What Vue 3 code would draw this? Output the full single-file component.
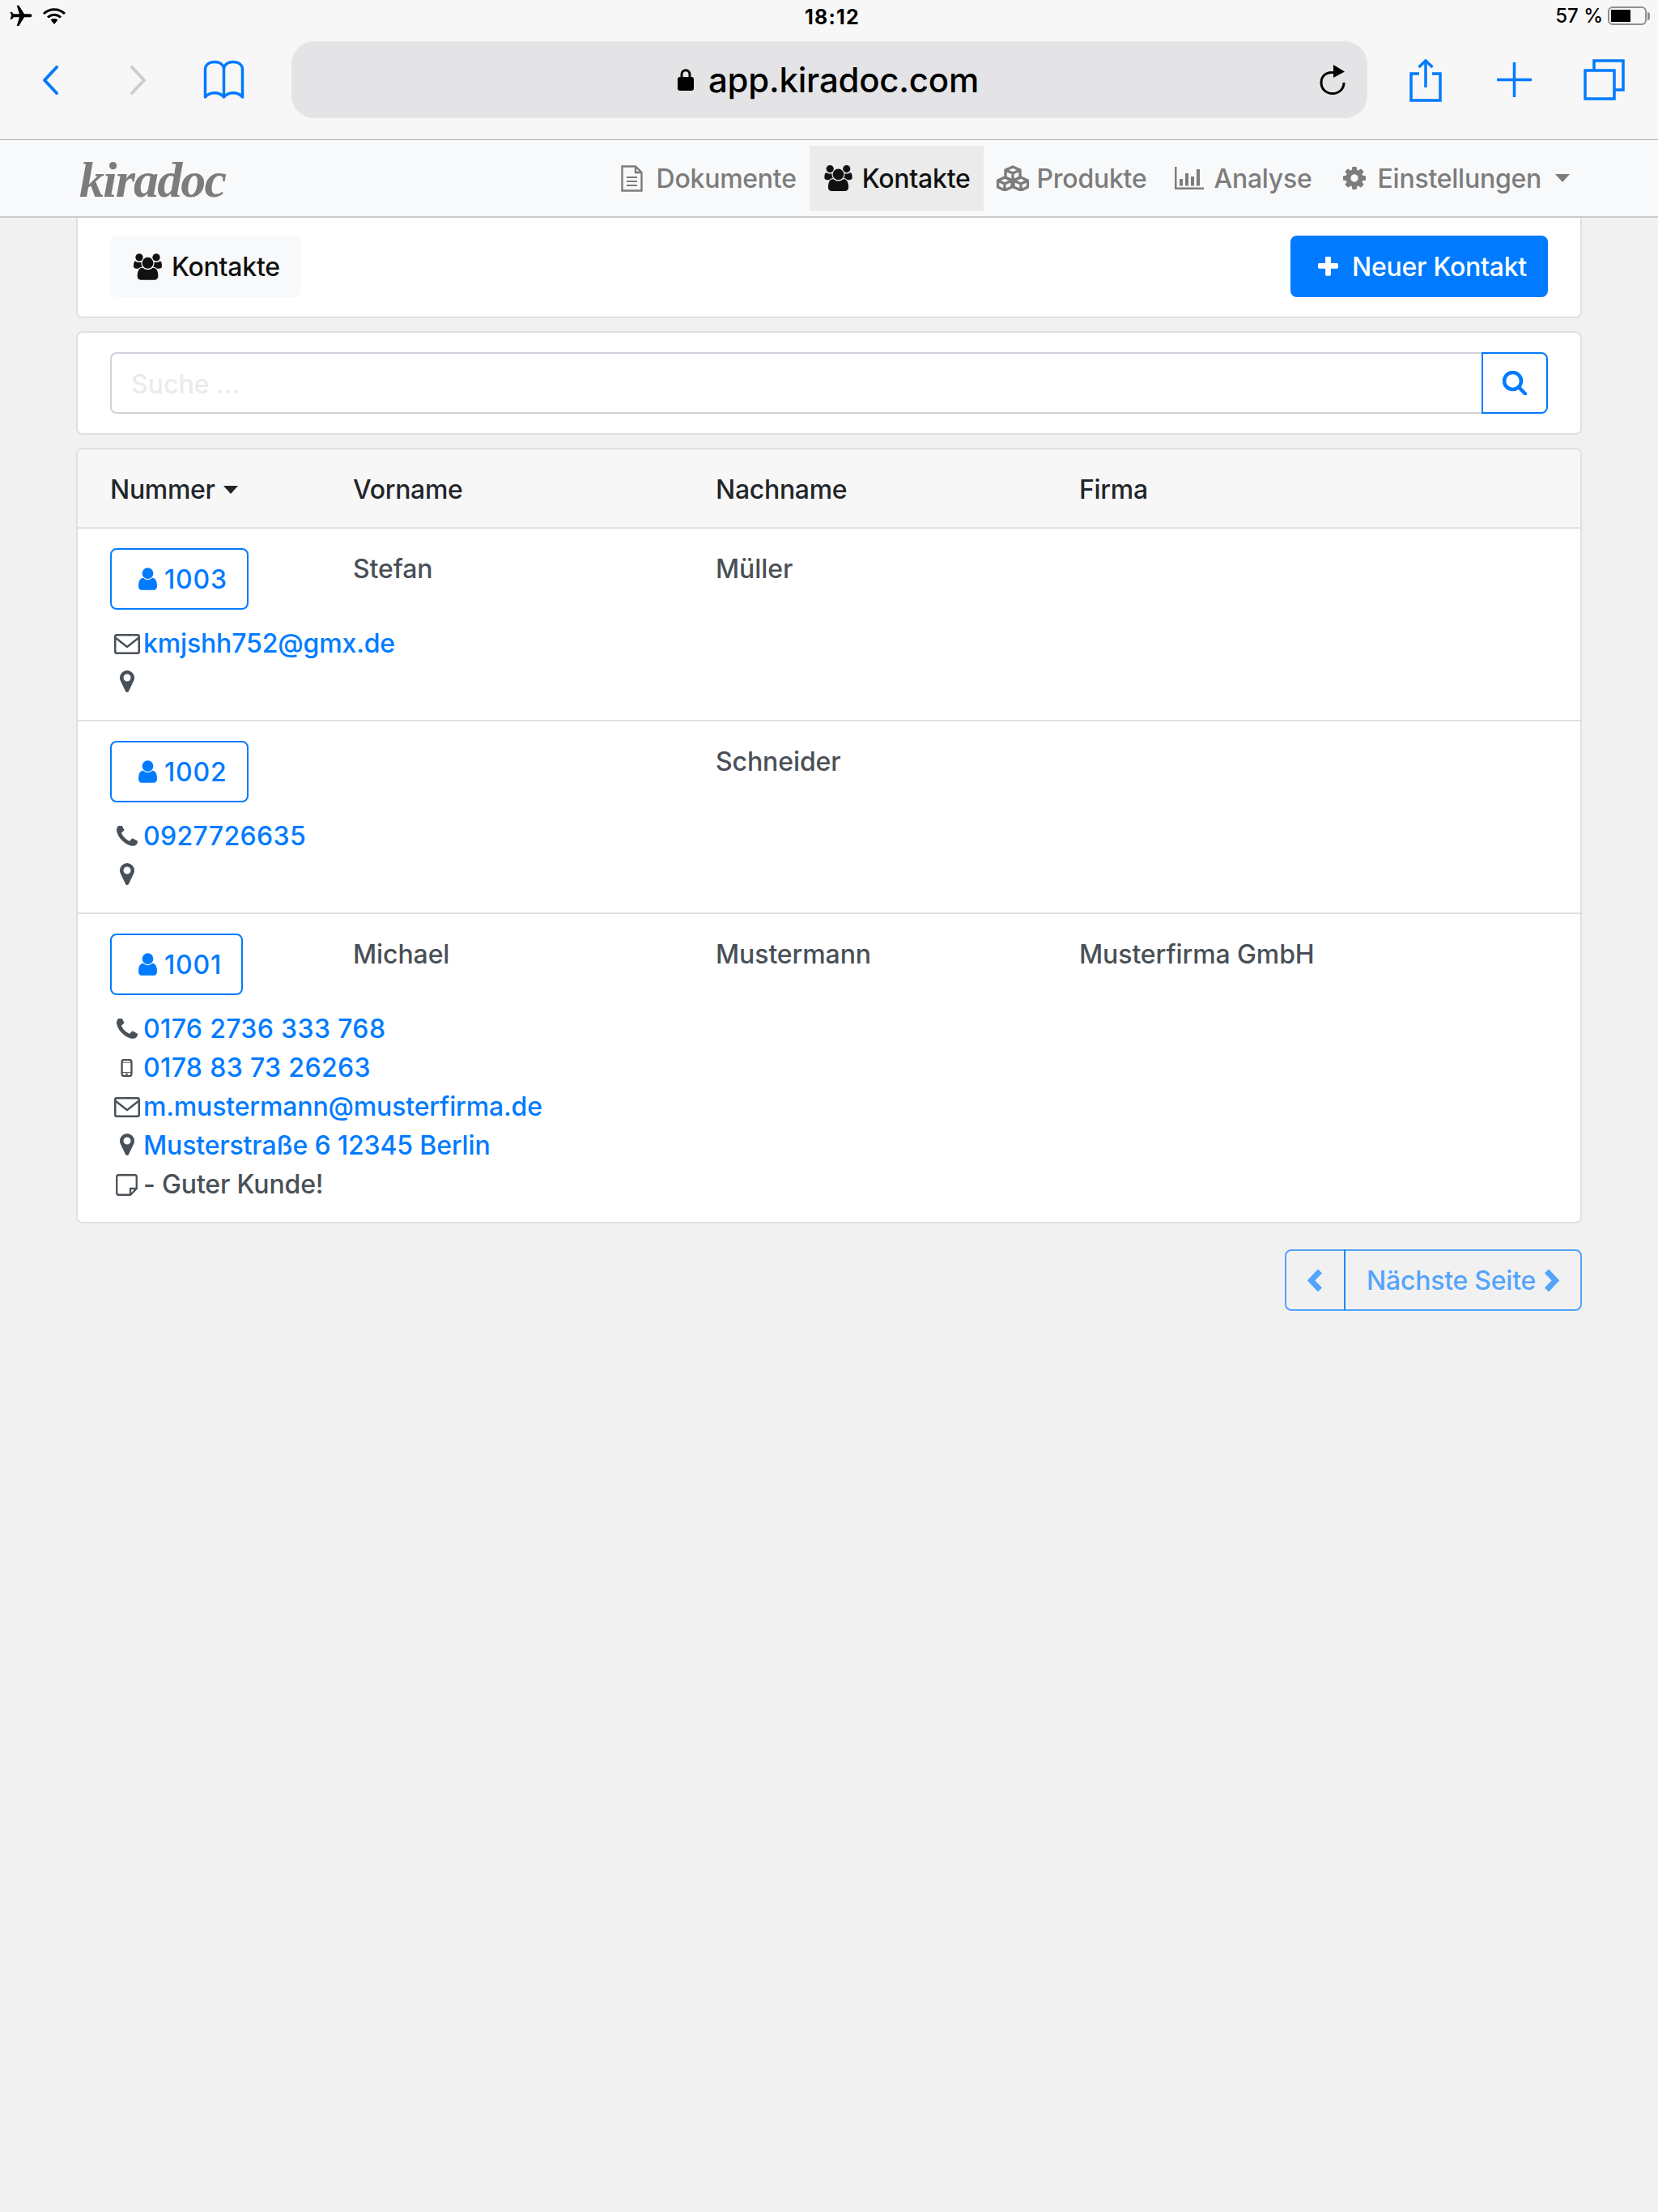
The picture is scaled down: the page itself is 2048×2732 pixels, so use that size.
<script setup>
const navItems = [
  { key: 'doc', label: 'Dokumente', icon: 'i-doc' },
  { key: 'con', label: 'Kontakte', icon: 'i-users', active: true },
  { key: 'pro', label: 'Produkte', icon: 'i-cubes' },
  { key: 'ana', label: 'Analyse', icon: 'i-bars' },
  { key: 'set', label: 'Einstellungen', icon: 'i-gear', caret: true },
]
const contacts = [
  { nr: '1003', first: 'Stefan', last: 'Müller', firm: '', lines: [
    { icon: 'mail', text: 'kmjshh752@gmx.de', link: true },
    { icon: 'pin', text: '', link: false },
  ] },
  { nr: '1002', first: '', last: 'Schneider', firm: '', lines: [
    { icon: 'phone', text: '0927726635', link: true, digits: true },
    { icon: 'pin', text: '', link: false },
  ] },
  { nr: '1001', first: 'Michael', last: 'Mustermann', firm: 'Musterfirma GmbH', lines: [
    { icon: 'phone', text: '0176 2736 333 768', link: true, digits: true },
    { icon: 'mobile', text: '0178 83 73 26263', link: true, digits: true },
    { icon: 'mail', text: 'm.mustermann@musterfirma.de', link: true },
    { icon: 'pin', text: 'Musterstraße 6 12345 Berlin', link: true },
    { icon: 'note', text: '- Guter Kunde!', link: false },
  ] },
]
</script>

<template>
  <div class="page">
    <svg class="defs" width="0" height="0" aria-hidden="true">
      <defs>
        <symbol id="i-users" viewBox="0 0 1920 1792"><path fill="currentColor" d="M593 896q-162 5-265 128h-134q-82 0-138-40.5t-56-118.5q0-353 124-353 6 0 43.5 21t97.5 42.5 119 21.5q67 0 133-23-5 37-5 66 0 139 81 256zm1071 637q0 120-73 189.5t-194 69.5h-874q-121 0-194-69.5t-73-189.5q0-53 3.5-103.5t14-109 26.5-108.5 43-97.5 62-81 85.5-53.5 111.5-20q10 0 43 21.5t73 48 107 48 135 21.5 135-21.5 107-48 73-48 43-21.5q61 0 111.5 20t85.5 53.5 62 81 43 97.5 26.5 108.5 14 109 3.5 103.5zm-1024-1277q0 106-75 181t-181 75-181-75-75-181 75-181 181-75 181 75 75 181zm704 384q0 159-112.5 271.5t-271.5 112.5-271.5-112.5-112.5-271.5 112.5-271.5 271.5-112.5 271.5 112.5 112.5 271.5zm576 225q0 78-56 118.5t-138 40.5h-134q-103-123-265-128 81-117 81-256 0-29-5-66 66 23 133 23 59 0 119-21.5t97.5-42.5 43.5-21q124 0 124 353zm-128-609q0 106-75 181t-181 75-181-75-75-181 75-181 181-75 181 75 75 181z"/></symbol>
        <symbol id="i-user" viewBox="256 128 1280 1536"><path fill="currentColor" d="M1536 1399q0 109-62.5 187t-150.5 78h-854q-88 0-150.5-78t-62.5-187q0-85 8.5-160.5t31.5-152 58.5-131 94-89 134.5-34.5q131 128 313 128t313-128q76 0 134.5 34.5t94 89 58.5 131 31.5 152 8.5 160.5zm-256-887q0 159-112.5 271.5t-271.5 112.5-271.5-112.5-112.5-271.5 112.5-271.5 271.5-112.5 271.5 112.5 112.5 271.5z"/></symbol>
        <symbol id="i-pin" viewBox="384 128 1024 1536"><path fill="currentColor" d="M1152 640q0-106-75-181t-181-75-181 75-75 181 75 181 181 75 181-75 75-181zm256 0q0 109-33 179l-364 774q-16 33-47.5 52t-67.5 19-67.5-19-46.5-52l-365-774q-33-70-33-179 0-212 150-362t362-150 362 150 150 362z"/></symbol>
        <symbol id="i-phone" viewBox="192 192 1408 1408"><path fill="currentColor" d="M1600 1240q0 27-10 70.5t-21 68.5q-21 50-122 106-94 51-186 51-27 0-53-3.5t-57.5-12.5-47-14.5-55.5-20.5-49-18q-98-35-175-83-127-79-264-216t-216-264q-48-77-83-175-3-9-18-49t-20.5-55.5-14.5-47-12.5-57.5-3.5-53q0-92 51-186 56-101 106-122 25-11 68.5-21t70.5-10q14 0 21 3 18 6 53 76 11 19 30 54t35 63.5 31 53.5q3 4 17.5 25t21.5 35.5 7 28.5q0 20-28.5 50t-62 55-62 53-28.5 46q0 9 5 22.5t8.5 20.5 14 24 11.5 19q76 137 174 235t235 174q2 1 19 11.5t24 14 20.5 8.5 22.5 5q18 0 46-28.5t53-62 55-62 50-28.5q14 0 28.5 7t35.5 21.5 25 17.5q25 15 53.5 31t63.5 35 54 30q70 35 76 53 3 7 3 21z"/></symbol>
        <symbol id="i-gear" viewBox="128 128 1536 1536"><path fill="currentColor" d="M1152 896q0-106-75-181t-181-75-181 75-75 181 75 181 181 75 181-75 75-181zm512-109v222q0 12-8 23t-20 13l-185 28q-19 54-39 91 35 50 107 138 10 12 10 25t-9 23q-27 37-99 108t-94 71q-12 0-26-9l-138-108q-44 23-91 38-16 136-29 186-7 28-36 28h-222q-14 0-24.5-8.5t-11.5-21.5l-28-184q-49-16-90-37l-141 107q-10 9-25 9-14 0-25-11-126-114-165-168-7-10-7-23 0-12 8-23 15-21 51-66.5t54-70.5q-27-50-41-99l-183-27q-13-2-21-12.5t-8-23.5v-222q0-12 8-23t19-13l186-28q14-46 39-92-40-57-107-138-10-12-10-24 0-10 9-23 26-36 98.5-107.5t94.5-71.5q13 0 26 10l138 107q44-23 91-38 16-136 29-186 7-28 36-28h222q14 0 24.5 8.5t11.5 21.5l28 184q49 16 90 37l142-107q9-9 24-9 13 0 25 10 129 119 165 170 7 8 7 22 0 12-8 23-15 21-51 66.5t-54 70.5q26 50 41 98l183 28q13 2 21 12.5t8 23.5z"/></symbol>
        <symbol id="i-doc" viewBox="0 0 27 33"><path fill="none" stroke="currentColor" stroke-width="2.4" d="M1.5 1.5H18L25.5 9V31.5H1.5Z M18 1.5V9H25.5"/><path fill="none" stroke="currentColor" stroke-width="2.2" d="M7 15H20M7 20H20M7 25H20"/></symbol>
        <symbol id="i-cubes" viewBox="0 0 40 32"><g fill="none" stroke="currentColor" stroke-width="3.4" stroke-linejoin="round"><path d="M20 2L29 6V15L20 19L11 15V6Z M11 6L20 10L29 6 M20 10V19"/><path d="M10 15L19 19V27L10 31L1.5 27V19Z M1.5 19L10 23L19 19 M10 23V31"/><path d="M30 15L38.5 19V27L30 31L21 27V19Z M21 19L30 23L38.5 19 M30 23V31"/></g></symbol>
        <symbol id="i-bars" viewBox="0 0 36 28"><path fill="currentColor" d="M0 0H2.500V25.500H36V28H0Z M6 15H10V23.500H6Z M13 8H17V23.500H13Z M20 12H24V23.500H20Z M27 3H31V23.500H27Z"/></symbol>
        <symbol id="i-plus" viewBox="192 192 1408 1408"><path fill="currentColor" d="M1600 736v192q0 40-28 68t-68 28h-416v416q0 40-28 68t-68 28h-192q-40 0-68-28t-28-68v-416h-416q-40 0-68-28t-28-68v-192q0-40 28-68t68-28h416v-416q0-40 28-68t68-28h192q40 0 68 28t28 68v416h416q40 0 68 28t28 68z"/></symbol>
      </defs>
    </svg>

    <header class="chrome">
      <div class="status">
        <div class="status-left">
          <svg class="plane" viewBox="0 0 24 24"><path fill="#000" transform="rotate(90 12 12)" d="M21 16v-2l-8-5V3.500c0-.83-.67-1.500-1.500-1.500S10 2.670 10 3.500V9l-8 5v2l8-2.500V19l-2 1.500V22l3.500-1 3.500 1v-1.500L13 19v-5.500l8 2.500z"/></svg>
          <svg class="wifi" viewBox="0 0 30 20"><g fill="none" stroke="#000" stroke-width="3"><path d="M2 7C9 0 21 0 28 7"/><path d="M7 11.500C11.500 7 18.500 7 23 11.500"/></g><path fill="#000" d="M10.500 14.500C13 12.500 17 12.500 19.500 14.500L15 20Z"/></svg>
        </div>
        <div class="time">18:12</div>
        <div class="status-right">
          <span class="pct">57 %</span>
          <span class="battery"><span class="battery-fill"></span></span>
          <span class="battery-tip"></span>
        </div>
      </div>
      <div class="toolbar">
        <svg class="back" viewBox="0 0 20 36"><path d="M18 2L3 18L18 34" fill="none" stroke="#007aff" stroke-width="4" stroke-linecap="round" stroke-linejoin="round"/></svg>
        <svg class="forward" viewBox="0 0 20 36"><path d="M2 2L17 18L2 34" fill="none" stroke="#cdcdcd" stroke-width="4" stroke-linecap="round" stroke-linejoin="round"/></svg>
        <svg class="book" viewBox="0 0 51 49"><path d="M25.500 46V12C25.500 6 21 2.500 14 2.500C7 2.500 2.500 6 2.500 12V46C8 39 20 39 25.500 46C31 39 43 39 48.500 46V12C48.500 6 44 2.500 37 2.500C30 2.500 25.500 6 25.500 12" fill="none" stroke="#007aff" stroke-width="3.500" stroke-linejoin="round"/></svg>
        <div class="urlbar">
          <span></span>
          <div class="url">
            <svg class="lock" viewBox="0 0 20 27"><path fill="none" stroke="#000" stroke-width="3" d="M5 12V7C5 0 15 0 15 7V12"/><rect y="10" width="20" height="17" rx="3" fill="#000"/></svg>
            <span>app.kiradoc.com</span>
          </div>
          <svg class="reload" viewBox="0 0 32 37"><path d="M21 10.500C10 7 2 13 2 22C2 30 8 35.500 16 35.500C24 35.500 30 30 30 22" fill="none" stroke="#000" stroke-width="3"/><path d="M17 0L31 8.500L17 16Z" fill="#000"/></svg>
        </div>
        <svg class="share" viewBox="0 0 40 54"><g fill="none" stroke="#007aff" stroke-width="3.500"><path d="M12 19H2V52H38V19H28"/><path d="M20 3V36"/><path d="M11.500 11L20 3L28.500 11"/></g></svg>
        <svg class="newtab" viewBox="0 0 43 43"><path d="M21.500 0V43M0 21.500H43" fill="none" stroke="#007aff" stroke-width="3.500"/></svg>
        <svg class="tabs" viewBox="0 0 51 51"><g fill="none" stroke="#007aff" stroke-width="3.500"><rect x="2" y="14" width="36" height="35"/><path d="M13 14V2H49V38H38"/></g></svg>
      </div>
    </header>

    <nav class="navbar">
      <div class="brand">kiradoc</div>
      <div class="nav">
        <div v-for="item in navItems" :key="item.key" class="nav-link" :class="[`nav-${item.key}`, { active: item.active }]">
          <span class="nav-icon"><svg><use :href="`#${item.icon}`"/></svg></span>
          <span class="lbl">{{ item.label }}</span>
          <span v-if="item.caret" class="caret nav-caret"></span>
        </div>
      </div>
    </nav>

    <main class="content">
      <section class="card title-card">
        <div class="title-pill">
          <span class="fw"><svg class="ic-users"><use href="#i-users"/></svg></span>
          <span class="lbl">Kontakte</span>
        </div>
        <button class="btn-new">
          <span class="fw"><svg class="ic-plus"><use href="#i-plus"/></svg></span>
          <span class="lbl">Neuer Kontakt</span>
        </button>
      </section>

      <section class="card search-card">
        <div class="search-input">Suche ...</div>
        <button class="search-btn">
          <svg class="ic-search" viewBox="0 0 30 30"><circle cx="12.500" cy="12.500" r="10.500" fill="none" stroke="currentColor" stroke-width="4.500"/><path d="M20 20L28 28.500" fill="none" stroke="currentColor" stroke-width="4.500" stroke-linecap="round"/></svg>
        </button>
      </section>

      <section class="card table-card">
        <div class="grid head">
          <div class="head-nr">Nummer <span class="caret sort-caret"></span></div>
          <div>Vorname</div>
          <div>Nachname</div>
          <div>Firma</div>
        </div>
        <div v-for="c in contacts" :key="c.nr" class="grid row">
          <div class="nr-cell">
            <button class="btn-nr">
              <span class="fw"><svg class="ic-user"><use href="#i-user"/></svg></span>
              <span class="lbl num">{{ c.nr }}</span>
            </button>
          </div>
          <div class="cell">{{ c.first }}</div>
          <div class="cell">{{ c.last }}</div>
          <div class="cell">{{ c.firm }}</div>
          <div class="lines">
            <div v-for="(l, i) in c.lines" :key="i" class="line">
              <span class="fw">
                <svg v-if="l.icon === 'mail'" class="ic-mail" viewBox="0 0 32 25"><rect x="1.250" y="1.250" width="29.500" height="22.500" rx="2" fill="none" stroke="currentColor" stroke-width="2.500"/><path d="M2 5L16 16L30 5" fill="none" stroke="currentColor" stroke-width="2.500"/></svg>
                <svg v-else-if="l.icon === 'pin'" class="ic-pin"><use href="#i-pin"/></svg>
                <svg v-else-if="l.icon === 'phone'" class="ic-phone"><use href="#i-phone"/></svg>
                <svg v-else-if="l.icon === 'mobile'" class="ic-mobile" viewBox="0 0 16 24"><rect x="1.500" y="1" width="13" height="22" rx="3" fill="none" stroke="currentColor" stroke-width="2.500"/><path d="M1.500 4.500H14.500V18H1.500Z" fill="none" stroke="currentColor" stroke-width="1"/><circle cx="8" cy="20.500" r="1.500" fill="currentColor"/></svg>
                <svg v-else class="ic-note" viewBox="0 0 27 27"><path d="M3.500 1.250H23.500C24.700 1.250 25.750 2.300 25.750 3.500V18L18 25.750H3.500C2.300 25.750 1.250 24.700 1.250 23.500V3.500C1.250 2.300 2.300 1.250 3.500 1.250Z M25.500 18H18V25.500" fill="none" stroke="currentColor" stroke-width="2.300"/></svg>
              </span>
              <span class="line-text" :class="{ link: l.link, digits: l.digits }">{{ l.text }}</span>
            </div>
          </div>
        </div>
      </section>

      <div class="pager">
        <button class="page-btn page-prev">
          <svg class="chev" viewBox="0 0 19 29"><path d="M15.500 3L4.500 14.500L15.500 26" fill="none" stroke="currentColor" stroke-width="7"/></svg>
        </button>
        <button class="page-btn page-next">
          <span class="lbl">Nächste Seite</span>
          <svg class="chev chev-next" viewBox="0 0 19 29"><path d="M3.500 3L14.500 14.500L3.500 26" fill="none" stroke="currentColor" stroke-width="7"/></svg>
        </button>
      </div>
    </main>
  </div>
</template>

<style scoped>
.page {
  min-height: 2732px;
  font-family: Inter, "Liberation Sans", sans-serif;
  font-size: 32px;
  line-height: 48px;
  font-weight: 450;
  color: #212529;
  background: #f1f1f1;
  display: flex;
  flex-direction: column;
}
.defs { position: absolute; }
svg { display: block; }
button { font: inherit; }
.lbl { padding-top: 2px; letter-spacing: -0.25px; }
.lbl.num { letter-spacing: 0.8px; }

.chrome { background: #f7f7f7; border-bottom: 1px solid #b2b2b2; }
.status {
  height: 39px;
  display: grid;
  grid-template-columns: 1fr auto 1fr;
  align-items: center;
  padding: 0 10px 0 10px;
  font-size: 24px;
  line-height: 30px;
  font-weight: 600;
  color: #000;
}
.status-left { display: flex; align-items: center; }
.plane { width: 32px; height: 32px; }
.wifi { width: 30px; height: 20px; margin-left: 10px; }
.time { margin-left: 8px; padding-top: 2px; font-size: 25px; font-weight: 700; letter-spacing: 1.2px; }
.status-right { display: flex; align-items: center; justify-content: flex-end; }
.pct { font-weight: 500; margin-right: 6px; }
.battery { width: 48px; height: 23px; border: 2px solid #8e8e8e; border-radius: 6px; padding: 2px; box-sizing: border-box; display: block; }
.battery-fill { display: block; width: 24px; height: 15px; background: #000; }
.battery-tip { width: 3px; height: 10px; background: #8e8e8e; border-radius: 0 3px 3px 0; margin-left: 1px; }

.toolbar { display: flex; align-items: center; padding: 12px 0 26px 52px; }
.back, .forward { width: 20px; height: 36px; }
.forward { margin-left: 89px; }
.book { width: 51px; height: 49px; margin-left: 70px; }
.urlbar {
  margin-left: 58px;
  width: 1329px;
  height: 95px;
  background: #e4e4e6;
  border-radius: 28px;
  display: grid;
  grid-template-columns: 1fr auto 1fr;
  align-items: center;
}
.url { display: flex; align-items: center; padding-right: 3px; font-size: 42px; line-height: 50px; font-weight: 500; letter-spacing: -0.25px; color: #000; }
.lock { width: 20px; height: 27px; margin-right: 18px; }
.reload { width: 32px; height: 37px; justify-self: end; margin-right: 27px; }
.share { width: 40px; height: 54px; margin-left: 52px; }
.newtab { width: 43px; height: 43px; margin-left: 68px; }
.tabs { width: 51px; height: 51px; margin-left: 64px; }

.navbar {
  height: 96px;
  box-sizing: border-box;
  background: #f8f9fa;
  border-bottom: 2px solid #cbcbcb;
  display: flex;
  align-items: center;
  padding: 0 93px 0 98px;
}
.brand {
  font-family: "Liberation Serif", serif;
  font-style: italic;
  font-weight: 700;
  font-size: 62px;
  line-height: 70px;
  letter-spacing: -1.8px;
  padding-top: 4px;
  color: #7c7c7c;
}
.nav { margin-left: auto; display: flex; }
.nav-link { display: flex; align-items: center; height: 80px; padding: 0 16px; color: #7c7c7c; }
.nav-link.active { background: #ebebeb; color: #111; }
.nav-icon { display: block; }
.nav-doc .nav-icon { width: 44px; }
.nav-doc svg { width: 27px; height: 33px; }
.nav-con .nav-icon { width: 47px; padding-left: 2px; }
.nav-con svg { width: 35px; height: 32px; }
.nav-pro .nav-icon { width: 50px; }
.nav-pro svg { width: 40px; height: 32px; }
.nav-ana .nav-icon { width: 48px; padding-left: 3px; }
.nav-ana svg { width: 36px; height: 28px; }
.nav-set .nav-icon { width: 43px; padding-left: 6px; }
.nav-set svg { width: 28px; height: 28px; }
.caret { display: inline-block; width: 0; height: 0; border-left: 9px solid transparent; border-right: 9px solid transparent; border-top: 10px solid currentColor; }
.nav-caret { margin-left: 17px; }

.content { padding: 0 94px; display: flex; flex-direction: column; gap: 16px; }
.card { background: #fff; border: 2px solid #e0e0e0; border-radius: 8px; box-sizing: border-box; }
.title-card {
  border-top: 0;
  border-top-left-radius: 0;
  border-top-right-radius: 0;
  padding: 22px 40px 24px;
  display: flex;
  justify-content: space-between;
}
.fw { width: 41px; flex: none; display: flex; justify-content: center; align-items: center; }
.title-pill {
  display: flex;
  align-items: center;
  height: 76px;
  padding: 0 26px;
  background: #f8f9fa;
  border-radius: 8px;
  color: #111;
}
.title-pill .fw { margin-right: 9px; }
.ic-users { width: 35px; height: 33px; }
.btn-new {
  display: flex;
  align-items: center;
  height: 76px;
  padding: 0 26px;
  background: #007bff;
  border: 0;
  border-radius: 8px;
  color: #fff;
}
.btn-new .fw { margin-right: 9px; }
.ic-plus { width: 25px; height: 25px; }

.search-card { padding: 24px 40px; display: flex; }
.search-input {
  flex: 1;
  height: 76px;
  box-sizing: border-box;
  border: 2px solid #ced4da;
  border-right: 0;
  border-radius: 8px 0 0 8px;
  padding: 14px 24px 10px 24px;
  color: #e9ebed;
}
.search-btn {
  width: 82px;
  height: 76px;
  box-sizing: border-box;
  background: #fff;
  border: 2px solid #007bff;
  border-radius: 0 8px 8px 0;
  color: #007bff;
  display: flex;
  align-items: center;
  justify-content: center;
}
.ic-search { width: 30px; height: 30px; }

.grid { display: grid; grid-template-columns: 300px 448px 449px 1fr; padding: 0 40px; }
.head { background: #f7f7f7; padding-top: 26px; padding-bottom: 22px; letter-spacing: -0.3px; border-radius: 6px 6px 0 0; }
.head-nr { display: flex; align-items: center; gap: 10px; }
.row { border-top: 2px solid #e0e0e0; padding-top: 24px; padding-bottom: 22px; color: #495057; }
.cell { padding-top: 2px; letter-spacing: -0.1px; }
.btn-nr {
  display: flex;
  align-items: center;
  height: 76px;
  padding: 0 24px;
  background: transparent;
  border: 2px solid #007bff;
  border-radius: 8px;
  color: #007bff;
}
.ic-user { width: 23px; height: 28px; }
.lines { grid-column: 1 / -1; margin-top: 18px; }
.line { display: flex; align-items: center; height: 48px; white-space: nowrap; }
.line-text { letter-spacing: -0.15px; }
.line-text.digits { letter-spacing: 0.35px; }
.link { color: #007bff; }
.ic-mail { width: 32px; height: 25px; }
.ic-pin { width: 18px; height: 27px; margin-bottom: 4px; }
.ic-phone { width: 26px; height: 26px; }
.ic-mobile { width: 15px; height: 22px; }
.ic-note { width: 27px; height: 27px; }

.pager { display: flex; justify-content: flex-end; margin-top: 16px; }
.page-btn {
  display: flex;
  align-items: center;
  height: 76px;
  padding: 0 26px;
  background: transparent;
  border: 2px solid #007bff;
  color: #007bff;
  opacity: 0.65;
}
.page-prev { padding: 0 26px; border-radius: 8px 0 0 8px; }
.page-next { margin-left: -2px; padding-right: 26px; border-radius: 0 8px 8px 0; }
.chev { width: 19px; height: 29px; }
.chev-next { margin-left: 10px; }
</style>

<style>
html, body { margin: 0; background: #f1f1f1; }
</style>
